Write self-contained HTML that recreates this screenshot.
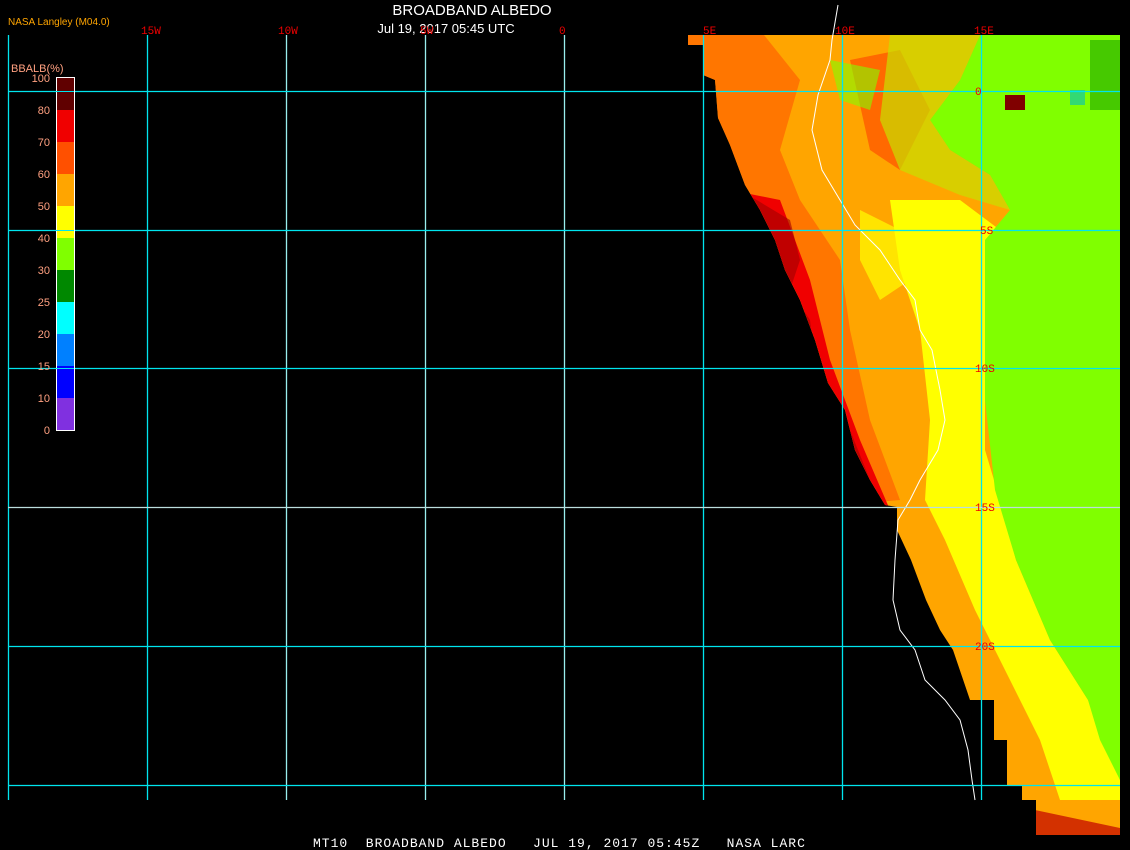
<!DOCTYPE html>
<html><head><style>
body{margin:0;background:#000;width:1130px;height:850px;overflow:hidden;position:relative;font-family:"Liberation Sans",sans-serif}
svg{position:absolute;left:0;top:0}
</style></head><body>
<svg width="1130" height="850" viewBox="0 0 1130 850">
<defs><clipPath id="land"><polygon points="688,35 1120,35 1120,835 1036,835 1036,800 1022,800 1022,785 1007,785 1007,740 994,740 994,700 970,700 953,650 940,630 926,600 911,560 897,530 897,507 885,505 870,480 855,450 845,410 828,383 815,340 800,300 785,270 775,240 760,210 745,185 730,145 718,118 715,80 703,75 703,45 688,45"/></clipPath></defs>
<g clip-path="url(#land)">
<rect x="680" y="30" width="450" height="810" fill="#ffa500"/>
<polygon points="680,30 760,30 800,80 780,150 800,200 840,260 850,330 870,420 900,500 680,520" fill="#ff6a00" opacity="0.8"/>
<polygon points="850,60 900,50 930,110 900,170 870,150" fill="#ff5a00" opacity="0.8"/>
<polygon points="680,180 780,200 810,280 830,360 860,440 890,510 680,520" fill="#f00000"/>
<polygon points="740,190 790,220 800,260 790,290 810,320 815,360 830,390 850,430 870,480 760,500" fill="#a00000" opacity="0.6"/>
<polygon points="890,200 960,200 1000,230 985,300 985,450 1000,500 1016,560 1050,640 1088,700 1120,780 1120,800 1060,800 1040,740 1010,680 975,610 945,540 925,500 930,420 920,330 900,270" fill="#ffff00"/>
<polygon points="860,210 900,230 910,280 880,300 860,260" fill="#ffff00" opacity="0.7"/>
<polygon points="980,35 1120,35 1120,780 1100,740 1088,700 1050,640 1016,560 995,490 985,400 985,300 985,240 1010,210 990,175 950,150 930,120 960,80" fill="#80ff00"/>
<polygon points="890,35 980,35 960,80 930,120 950,150 990,175 1010,210 960,195 900,170 880,120" fill="#c8e000" opacity="0.7"/>
<polygon points="830,60 880,70 870,110 840,100" fill="#80ff00" opacity="0.6"/>
<polygon points="1000,800 1120,805 1120,840 1035,840" fill="#ffa500"/>
<polygon points="1035,810 1120,828 1120,840 1035,840" fill="#c00000" opacity="0.7"/>
<rect x="1090" y="40" width="30" height="70" fill="#008800" opacity="0.45"/>
<rect x="1005" y="95" width="20" height="15" fill="#800000"/>
<rect x="1070" y="90" width="15" height="15" fill="#00c0c0" opacity="0.6"/>
</g>
<polyline points="838,5 832,40 830,60 818,95 812,130 822,170 840,200 855,225 880,250 900,280 915,300 920,330 932,350 940,390 945,420 938,450 920,480 910,500 898,520 895,560 893,600 900,630 915,650 925,680 945,700 960,720 968,750 972,780 975,800" fill="none" stroke="#fff" stroke-width="1"/>
<g stroke="#00e5ee" stroke-width="1.3">
<line x1="8.5" y1="35" x2="8.5" y2="800"/><line x1="147.5" y1="35" x2="147.5" y2="800"/>
<line x1="286.5" y1="35" x2="286.5" y2="800" stroke="#9ee"/><line x1="425.5" y1="35" x2="425.5" y2="800" stroke="#9ee"/>
<line x1="564.5" y1="35" x2="564.5" y2="800" stroke="#9ee"/><line x1="703.5" y1="35" x2="703.5" y2="800"/>
<line x1="842.5" y1="35" x2="842.5" y2="800"/><line x1="981.5" y1="35" x2="981.5" y2="800"/>
<line x1="8" y1="91.5" x2="1120" y2="91.5"/><line x1="8" y1="230.5" x2="1120" y2="230.5"/>
<line x1="8" y1="368.5" x2="1120" y2="368.5"/><line x1="8" y1="507.5" x2="1120" y2="507.5" stroke="#bdd"/>
<line x1="8" y1="646.5" x2="1120" y2="646.5"/><line x1="8" y1="785.5" x2="1120" y2="785.5"/>
</g>
<g>
<rect x="56" y="78" width="18" height="32" fill="#600000"/><rect x="56" y="110" width="18" height="32" fill="#f00000"/>
<rect x="56" y="142" width="18" height="32" fill="#ff5000"/><rect x="56" y="174" width="18" height="32" fill="#ffa500"/>
<rect x="56" y="206" width="18" height="32" fill="#ffff00"/><rect x="56" y="238" width="18" height="32" fill="#80ff00"/>
<rect x="56" y="270" width="18" height="32" fill="#008800"/><rect x="56" y="302" width="18" height="32" fill="#00ffff"/>
<rect x="56" y="334" width="18" height="32" fill="#0080ff"/><rect x="56" y="366" width="18" height="32" fill="#0000ff"/>
<rect x="56" y="398" width="18" height="32" fill="#8030e0"/>
<rect x="56.5" y="77.5" width="18" height="353" fill="none" stroke="#fff"/>
<line x1="8" y1="91.5" x2="74" y2="91.5" stroke="#00e5ee"/><line x1="8" y1="230.5" x2="74" y2="230.5" stroke="#00e5ee"/><line x1="8" y1="368.5" x2="74" y2="368.5" stroke="#00e5ee"/>
</g>
<g font-size="11" fill="#ffa080" text-anchor="end" font-family="Liberation Sans">
<text x="50" y="82">100</text><text x="50" y="114">80</text><text x="50" y="146">70</text><text x="50" y="178">60</text><text x="50" y="210">50</text><text x="50" y="242">40</text><text x="50" y="274">30</text><text x="50" y="306">25</text><text x="50" y="338">20</text><text x="50" y="370">15</text><text x="50" y="402">10</text><text x="50" y="434">0</text>
<text x="11" y="72" text-anchor="start" font-size="11">BBALB(%)</text>
</g>
<text x="8" y="25" font-size="10" fill="#ffa500">NASA Langley (M04.0)</text>
<text x="472" y="15" font-size="15" fill="#fff" text-anchor="middle">BROADBAND ALBEDO</text>
<text x="446" y="33" font-size="13" fill="#fff" text-anchor="middle">Jul 19, 2017 05:45 UTC</text>
<g font-size="11" fill="#f00000" font-family="Liberation Mono">
<text x="141" y="34">15W</text><text x="278" y="34">10W</text><text x="420" y="34">5W</text><text x="559" y="34">0</text><text x="703" y="34">5E</text><text x="835" y="34">10E</text><text x="974" y="34">15E</text>
<text x="975" y="95">0</text><text x="980" y="234">5S</text><text x="975" y="372">10S</text><text x="975" y="511">15S</text><text x="975" y="650">20S</text>
</g>
<text x="313" y="847" font-size="13" fill="#fff" font-family="Liberation Mono" letter-spacing="1" style="white-space:pre">MT10  BROADBAND ALBEDO   JUL 19, 2017 05:45Z   NASA LARC</text>
</svg>
</body></html>
